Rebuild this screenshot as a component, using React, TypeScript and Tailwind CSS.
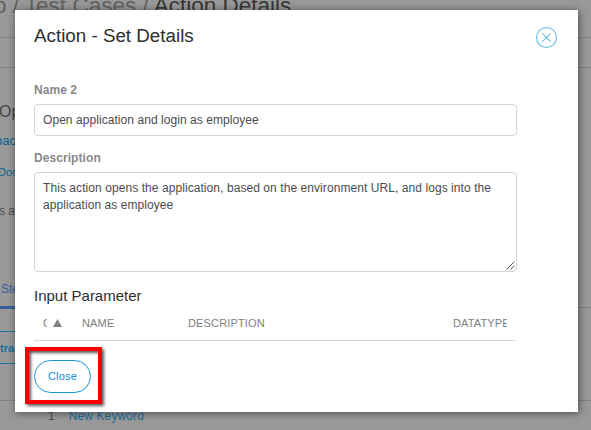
import React from "react";

function PageBehind() {
  return (
    <div className="flex h-[430px] w-[591px] flex-col overflow-hidden bg-[#999999] text-[12px] text-[#4d4d4d]">
      <div className="h-[38px] shrink-0 border-b border-[#828282]">
        <div className="-mt-[7px] -ml-[6px] whitespace-nowrap text-[22.5px] leading-[25px] text-[#626262]">
          o / Test Cases / <span className="text-[#373737]">Action Details</span>
        </div>
      </div>
      <div className="h-[30px] shrink-0 border-b border-[#828282]" />
      <div className="h-[240px] shrink-0 border-b border-[#828282]">
        <div className="-ml-px pt-[32px] text-[16px] leading-[24px] text-[#444444]">Open application</div>
        <div className="-ml-[5px] mt-[7px] text-[13px] leading-[20px] text-[#0b6591]">pace</div>
        <div className="-ml-[2px] mt-[11px] text-[11px] leading-[20px] text-[#0b6591]">Documentation</div>
        <div className="-ml-[1px] mt-[19px] leading-[20px]">s action opens</div>
        <div className="mt-[58px] flex h-[30px] w-[60px] items-start border-b-3 border-[#395f9f] pl-px text-[12px] leading-[20px] text-[#395f9f]">
          Steps
        </div>
      </div>
      <div className="h-[93px] shrink-0 border-b border-[#828282] pt-[23px]">
        <div className="flex h-[33px] w-[80px] items-center border-y border-[#1a75a3] pt-[2px] text-[11px] font-bold text-[#1a6f9b]">
          tract
        </div>
      </div>
      <div className="flex gap-[14px] pt-[5px] pl-[48px] text-[12px] leading-[20px] tracking-[0.1px]">
        <span>1</span>
        <span className="text-[#1a6f9b]">New Keyword</span>
      </div>
    </div>
  );
}

function FieldLabel({ children }: { children: React.ReactNode }) {
  return <div className="text-[12px] leading-[20px] font-bold tracking-[0.07px] text-[#888888]">{children}</div>;
}

function DetailsDialog() {
  return (
    <div className="absolute top-[10px] left-[15px] flex h-[402px] w-[563px] flex-col bg-white pl-[19px] text-[12px] text-[#4c4c4c] shadow-[1px_1px_8px_rgba(0,0,0,0.5)]">
      <div className="flex h-[70px] shrink-0 items-start justify-between pr-[20px]">
        <h1 className="pt-[13px] text-[18.8px] leading-[26px] text-[#2e2e2e]">Action - Set Details</h1>
        <svg className="mt-[16px]" width="23" height="23" viewBox="0 0 23 23" fill="none" stroke="#67bde8">
          <circle cx="11.5" cy="11.5" r="10" strokeWidth="1.1" />
          <path d="M7.4 7.4l8.2 8.2M15.6 7.4l-8.2 8.2" strokeWidth="1.1" />
        </svg>
      </div>
      <FieldLabel>Name 2</FieldLabel>
      <div className="mt-[4px] flex h-[32px] w-[483px] shrink-0 items-center rounded-[4px] border border-[#d4d4d4] px-[8px] tracking-[0.06px]">
        Open application and login as employee
      </div>
      <div className="mt-[12px]">
        <FieldLabel>Description</FieldLabel>
      </div>
      <div className="mt-[4px] flex h-[100px] w-[483px] shrink-0 items-start justify-between rounded-[4px] border border-[#d4d4d4] pt-[7px] pl-[8px] leading-[17px] tracking-[0.07px]">
        <p className="whitespace-nowrap">
          This action opens the application, based on the environment URL, and logs into the
          <br />
          application as employee
        </p>
        <svg className="mr-px mb-px shrink-0 self-end" width="9" height="9" viewBox="0 0 9 9" stroke="#555" fill="none">
          <path d="M0.5 8.5l8-8M4.5 8.5l4-4" />
        </svg>
      </div>
      <h2 className="mt-[14px] text-[15px] leading-[20px] text-[#2e2e2e]">Input Parameter</h2>
      <div className="mt-[7px] flex h-[28px] w-[482px] shrink-0 border-b border-[#d8d8d8] text-[11px] leading-[20px] tracking-[0.15px] text-[#808080]">
        <div className="flex w-[48px] pl-[9px]">
          <span className="w-[4px] overflow-hidden">O</span>
          <svg className="mt-[6px] ml-[6px]" width="9" height="8" viewBox="0 0 9 8" fill="#808080">
            <path d="M4.5 0L9 8H0z" />
          </svg>
        </div>
        <div className="w-[106px]">NAME</div>
        <div className="w-[265px]">DESCRIPTION</div>
        <div className="w-[54px] overflow-hidden">DATATYPE</div>
      </div>
      <div className="mt-[6px] -ml-[9px] h-[57px] w-[77px] shrink-0 border-4 border-[#fb0000] pt-[9px] pl-[5px] shadow-[2px_2px_3px_rgba(0,0,0,0.65),inset_2px_2px_3px_rgba(0,0,0,0.65)]">
        <button className="flex h-[33px] w-[57px] items-center justify-center rounded-full border border-[#1295d8] bg-white text-[11px] tracking-[0.2px] text-[#0b8fd3]">
          Close
        </button>
      </div>
    </div>
  );
}

export default function App() {
  return (
    <div className="relative h-[430px] w-[591px] overflow-hidden font-['Liberation_Sans',Arial,sans-serif]">
      <PageBehind />
      <DetailsDialog />
    </div>
  );
}
